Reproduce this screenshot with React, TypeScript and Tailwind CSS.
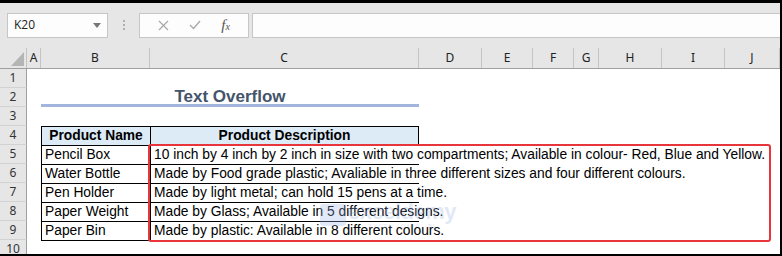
import { ReactNode } from 'react';

const colHeads: [string, string][] = [
  ['A', 'w-[14px]'],
  ['B', 'w-[109px]'],
  ['C', 'w-[269px]'],
  ['D', 'w-[63px]'],
  ['E', 'w-[51px]'],
  ['F', 'w-[41px]'],
  ['G', 'w-[25px]'],
  ['H', 'w-[63px]'],
  ['I', 'w-[63px]'],
  ['J', 'w-[55px]'],
];

const products = [
  ['Pencil Box', '10 inch by 4 inch by 2 inch in size with two compartments; Available in colour- Red, Blue and Yellow.'],
  ['Water Bottle', 'Made by Food grade plastic; Avaliable in three different sizes and four different colours.'],
  ['Pen Holder', 'Made by light metal; can hold 15 pens at a time.'],
  ['Paper Weight', 'Made by Glass; Available in 5 different designs.'],
  ['Paper Bin', 'Made by plastic: Available in 8 different colours.'],
];

function Row({ n, children }: { n: number; children?: ReactNode }) {
  return (
    <div className="flex h-[19px] shrink-0">
      <div className="w-[27px] shrink-0 bg-[#e6e6e6] border-r border-b border-r-[#9f9f9f] border-b-[#d2d2d2] flex items-center justify-center text-[12px] text-[#333] font-['Noto_Sans',sans-serif]">
        {n}
      </div>
      <div className="w-[14px] shrink-0" />
      {children}
    </div>
  );
}

function FormulaBar() {
  return (
    <div className="h-[45px] shrink-0 bg-[#e6e6e6] flex items-center pl-[7px] pb-[1px]">
      <div className="w-[101px] h-[25px] bg-[#fdfdfd] border border-[#c6c6c6] flex items-center justify-between px-[6px] font-['Open_Sans',sans-serif] text-[12px] text-[#222]">
        <span>K20</span>
        <svg width="8" height="5" viewBox="0 0 8 5">
          <path d="M0 0h8L4 5z" fill="#777" />
        </svg>
      </div>
      <div className="w-[31px] flex flex-col items-center gap-[2px]">
        <span className="w-[2px] h-[2px] bg-[#b0b0b0]" />
        <span className="w-[2px] h-[2px] bg-[#b0b0b0]" />
        <span className="w-[2px] h-[2px] bg-[#b0b0b0]" />
      </div>
      <div className="w-[110px] h-[25px] bg-[#fdfdfd] border border-[#c6c6c6] flex items-center justify-around px-[8px]">
        <svg width="11" height="11" viewBox="0 0 11 11">
          <path d="M1 1l9 9M10 1l-9 9" stroke="#a8a8a8" strokeWidth="1.2" />
        </svg>
        <svg width="12" height="10" viewBox="0 0 12 10">
          <path d="M1 5l3.5 3.5L11 1" stroke="#a8a8a8" strokeWidth="1.3" fill="none" />
        </svg>
        <span className="font-['Liberation_Serif',serif] italic text-[15px] text-[#555] leading-none">
          f<span className="text-[10px]">x</span>
        </span>
      </div>
      <div className="ml-[3px] flex-1 h-[25px] bg-[#fdfdfd] border border-[#c6c6c6] border-r-0" />
    </div>
  );
}

export default function App() {
  const cell = "font-['Liberation_Sans',sans-serif] text-[13.8px] text-black";
  return (
    <div className="w-[782px] h-[256px] bg-black border-t-[3px] border-r-2 border-b-2 border-black overflow-hidden">
      <div className="relative w-[780px] h-[251px] bg-white flex flex-col overflow-hidden">
        <FormulaBar />

        {/* column headers */}
        <div className="flex h-[21px] shrink-0 bg-[#e6e6e6] border-b border-[#9f9f9f]">
          <div className="w-[27px] shrink-0 flex items-end justify-end pr-[2px] pb-[2px] border-r border-[#c4c4c4]">
            <svg width="13" height="14" viewBox="0 0 13 14">
              <path d="M13 0v14H0z" fill="#b5b5b5" />
            </svg>
          </div>
          {colHeads.map(([l, w]) => (
            <div
              key={l}
              className={`${w} shrink-0 flex items-center justify-center border-r border-[#c4c4c4] text-[12px] text-[#222] font-['Noto_Sans',sans-serif]`}
            >
              {l}
            </div>
          ))}
        </div>

        <Row n={1} />
        <Row n={2}>
          <div className="w-[378px] shrink-0 border-b-[3px] border-[#a2b6dd] flex items-center justify-center">
            <span className="font-['Liberation_Sans',sans-serif] font-bold text-[17px] text-[#44546a] pt-[1px]">Text Overflow</span>
          </div>
        </Row>
        <Row n={3} />
        <Row n={4}>
          <div className={`w-[109px] shrink-0 border-t border-l border-black bg-[#ddebf7] flex items-center justify-center font-bold ${cell}`}>
            Product Name
          </div>
          <div className={`w-[269px] shrink-0 border-t border-l border-r border-black bg-[#ddebf7] flex items-center justify-center font-bold ${cell}`}>
            Product Description
          </div>
        </Row>
        {products.map(([name, desc], i) => (
          <Row key={name} n={5 + i}>
            <div className={`w-[109px] shrink-0 border-t border-l border-black flex items-center pl-[3px] ${cell}`}>
              {name}
            </div>
            <div className={`w-[269px] shrink-0 border-t border-l border-black flex items-center pl-[3px] whitespace-nowrap overflow-visible ${cell}`}>
              {desc}
            </div>
          </Row>
        ))}
        <Row n={10}>
          <div className="w-[109px] shrink-0 border-t border-black" />
          <div className="w-[269px] shrink-0 border-t border-black" />
        </Row>

        {/* watermark */}
        <div className="absolute left-[320px] top-[198px] flex items-center gap-[2px] opacity-30 pointer-events-none">
          <div className="w-[26px] h-[22px] bg-[#9fb4e6] rounded-[3px]" />
          <div className="flex flex-col leading-none">
            <span className="font-['Liberation_Sans',sans-serif] font-bold text-[22px] text-[#9fb4e6] tracking-[-0.5px]">exceldemy</span>
            <span className="font-['Liberation_Sans',sans-serif] text-[6px] text-[#9fb4e6] tracking-[1px] text-center">EXCEL · DATA · BI</span>
          </div>
        </div>

        {/* red highlight */}
        <div className="absolute left-[148px] top-[141px] w-[623px] h-[98px] border-2 border-[#e8353c] rounded-[3px] pointer-events-none" />
      </div>
    </div>
  );
}
